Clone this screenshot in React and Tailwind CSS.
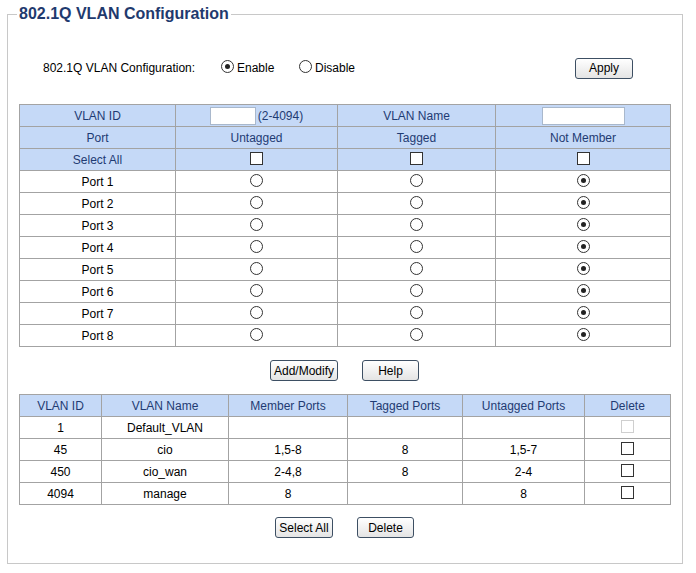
const PORTS = [1, 2, 3, 4, 5, 6, 7, 8];

const VLANS = [
  { id: '1', name: 'Default_VLAN', member: '', tagged: '', untagged: '', locked: true },
  { id: '45', name: 'cio', member: '1,5-8', tagged: '8', untagged: '1,5-7' },
  { id: '450', name: 'cio_wan', member: '2-4,8', tagged: '8', untagged: '2-4' },
  { id: '4094', name: 'manage', member: '8', tagged: '', untagged: '8' },
];

const cell = 'border border-[#a3a3a3] p-0 h-[22px] text-center align-middle';
const head = `${cell} bg-[#c5d9f7] text-[#1f3b73]`;

function Radio({ checked }) {
  return (
    <span className="relative -top-[2px] inline-flex items-center justify-center w-[13px] h-[13px] rounded-full border border-[#333] bg-white align-middle">
      {checked && <span className="w-[5px] h-[5px] rounded-full bg-[#222]" />}
    </span>
  );
}

function Check({ disabled }) {
  return (
    <span
      className={`relative -top-[2px] inline-block w-[13px] h-[13px] border bg-white align-middle ${
        disabled ? 'border-[#cfcfcf]' : 'border-[#333]'
      }`}
    />
  );
}

function Btn({ children, w }) {
  return (
    <button
      type="button"
      className={`${w} h-[21px] rounded-[3px] border border-[#3d4f63] bg-gradient-to-b from-white to-[#e4e4e4] text-[12px] leading-none text-black`}
    >
      {children}
    </button>
  );
}

export default function App() {
  return (
    <div className="w-[696px] h-[573px] bg-white text-[12px] text-black font-['Liberation_Sans',Arial,sans-serif]">
      <fieldset className="ml-[7px] mt-[5px] w-[676px] h-[559px] border border-[#c8c8c8]">
        <legend className="ml-[9px] px-[2px] text-[16px] leading-[18px] font-bold text-[#1f3a6e]">
          802.1Q VLAN Configuration
        </legend>

        <div className="flex items-center h-[22px] mt-[34px] pl-[35px] pr-[49px]">
          <span className="w-[178px]">802.1Q VLAN Configuration:</span>
          <label className="flex items-center gap-[3px] w-[78px]">
            <Radio checked /> Enable
          </label>
          <label className="flex items-center gap-[3px]">
            <Radio /> Disable
          </label>
          <div className="ml-auto">
            <Btn w="w-[58px]">Apply</Btn>
          </div>
        </div>

        <table className="ml-[11px] mt-[25px] w-[651px] table-fixed border-collapse">
          <colgroup>
            <col className="w-[156px]" />
            <col className="w-[162px]" />
            <col className="w-[158px]" />
            <col className="w-[175px]" />
          </colgroup>
          <tbody>
            <tr>
              <td className={head}>VLAN ID</td>
              <td className={head}>
                <div className="flex items-center justify-center gap-[2px]">
                  <input className="w-[46px] h-[18px] border border-[#a9b8cc] bg-white" />
                  <span>(2-4094)</span>
                </div>
              </td>
              <td className={head}>VLAN Name</td>
              <td className={head}>
                <input className="w-[83px] h-[18px] border border-[#a9b8cc] bg-white align-middle" />
              </td>
            </tr>
            <tr>
              <td className={head}>Port</td>
              <td className={head}>Untagged</td>
              <td className={head}>Tagged</td>
              <td className={head}>Not Member</td>
            </tr>
            <tr>
              <td className={head}>Select All</td>
              <td className={head}><Check /></td>
              <td className={head}><Check /></td>
              <td className={head}><Check /></td>
            </tr>
            {PORTS.map((p) => (
              <tr key={p}>
                <td className={cell}>Port {p}</td>
                <td className={cell}><Radio /></td>
                <td className={cell}><Radio /></td>
                <td className={cell}><Radio checked /></td>
              </tr>
            ))}
          </tbody>
        </table>

        <div className="flex justify-center gap-[24px] ml-[11px] w-[651px] mt-[13px]">
          <Btn w="w-[68px]">Add/Modify</Btn>
          <Btn w="w-[57px]">Help</Btn>
        </div>

        <table className="ml-[11px] mt-[13px] w-[651px] table-fixed border-collapse">
          <colgroup>
            <col className="w-[82px]" />
            <col className="w-[127px]" />
            <col className="w-[119px]" />
            <col className="w-[115px]" />
            <col className="w-[122px]" />
            <col className="w-[86px]" />
          </colgroup>
          <tbody>
            <tr>
              <td className={head}>VLAN ID</td>
              <td className={head}>VLAN Name</td>
              <td className={head}>Member Ports</td>
              <td className={head}>Tagged Ports</td>
              <td className={head}>Untagged Ports</td>
              <td className={head}>Delete</td>
            </tr>
            {VLANS.map((v) => (
              <tr key={v.id}>
                <td className={cell}>{v.id}</td>
                <td className={cell}>{v.name}</td>
                <td className={cell}>{v.member}</td>
                <td className={cell}>{v.tagged}</td>
                <td className={cell}>{v.untagged}</td>
                <td className={cell}><Check disabled={v.locked} /></td>
              </tr>
            ))}
          </tbody>
        </table>

        <div className="flex justify-center gap-[24px] ml-[11px] w-[651px] mt-[12px]">
          <Btn w="w-[58px]">Select All</Btn>
          <Btn w="w-[57px]">Delete</Btn>
        </div>
      </fieldset>
    </div>
  );
}
